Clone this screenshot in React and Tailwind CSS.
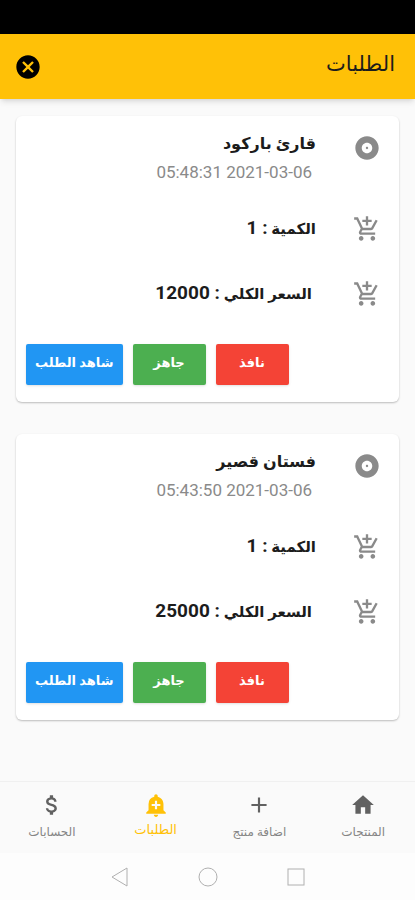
import React from 'react';
import { useState } from 'react';
import {
  MdAdd,
  MdAddAlert,
  MdAddShoppingCart,
  MdAlbum,
  MdAttachMoney,
  MdCancel,
  MdHome,
} from 'react-icons/md';

const orders = [
  { id: 1, name: 'قارئ باركود', date: '2021-03-06 05:48:31', count: 1, total: 12000 },
  { id: 2, name: 'فستان قصير', date: '2021-03-06 05:43:50', count: 1, total: 25000 },
];

const tabs = [
  { id: 'products', label: 'المنتجات', Icon: MdHome },
  { id: 'add', label: 'اضافة منتج', Icon: MdAdd },
  { id: 'orders', label: 'الطلبات', Icon: MdAddAlert },
  { id: 'accounts', label: 'الحسابات', Icon: MdAttachMoney },
];

const OrderCard = ({ order }) => {
  const button =
    'h-[41px] min-w-[73px] rounded-xs px-[9px] pb-1 text-[13px] font-bold text-white shadow-sm';

  return (
    <article className="rounded-md bg-white pt-4 pb-[17px] shadow-[0_1px_2px_rgba(0,0,0,0.25)]">
      <div className="flex gap-[37px] px-[18px]">
        <MdAlbum className="mt-[2px] size-7 shrink-0 text-[#8a8a8a]" />
        <div>
          <h2 className="text-base leading-6 font-bold">{order.name}</h2>
          <p className="mt-1 pr-1 text-[17px] leading-6 text-[#8a8a8a]">
            {order.date}
          </p>
        </div>
      </div>

      <div className="mt-3 flex h-[65px] items-center gap-[37px] px-[18px]">
        <MdAddShoppingCart className="size-7 shrink-0 text-[#8a8a8a]" />
        <p className="text-[15px] leading-6 font-bold">
          الكمية <span className="text-[19px]">: {order.count}</span>
        </p>
      </div>
      <div className="flex h-[65px] items-center gap-[37px] px-[18px]">
        <MdAddShoppingCart className="size-7 shrink-0 text-[#8a8a8a]" />
        <p className="pr-1 text-[15px] leading-6 font-bold">
          السعر الكلي <span className="text-[19px]">: {order.total}</span>
        </p>
      </div>

      <div className="mt-[18px] flex justify-end gap-[10px] px-[10px]">
        <button type="button" className={`${button} bg-[#f44336]`}>
          نافذ
        </button>
        <button type="button" className={`${button} bg-[#4caf50]`}>
          جاهز
        </button>
        <button type="button" className={`${button} bg-[#2196f3]`}>
          شاهد الطلب
        </button>
      </div>
    </article>
  );
};

const App = () => {
  const [active, setActive] = useState('orders');

  return (
    <div
      dir="rtl"
      className="flex min-h-screen flex-col bg-[#fafafa] font-[Roboto,'DejaVu_Sans',sans-serif] text-[#1c1c1c]"
    >
      <div className="h-[34px] bg-black" />
      <header className="flex h-[65px] items-center justify-between bg-[#ffc107] pr-5 pl-[14px] shadow-md">
        <h1 className="pb-1 text-[21px] font-medium">الطلبات</h1>
        <button type="button" aria-label="إغلاق">
          <MdCancel className="size-7 text-black" />
        </button>
      </header>

      <main className="flex grow flex-col gap-8 px-4 py-[17px]">
        {orders.map((order) => (
          <OrderCard key={order.id} order={order} />
        ))}
      </main>

      <nav className="flex h-[72px] border-t border-[#f0f0f0]">
        {tabs.map(({ id, label, Icon }) => (
          <button
            key={id}
            type="button"
            onClick={() => setActive(id)}
            className={`flex flex-1 flex-col items-center pt-[10px] ${
              active === id
                ? 'gap-1 text-[13px] text-[#ffc107]'
                : 'gap-[6px] text-xs text-[#616161]'
            }`}
          >
            <Icon className="size-[26px]" />
            <span className={active === id ? 'leading-4' : 'leading-4 text-[#858585]'}>
              {label}
            </span>
          </button>
        ))}
      </nav>

      {/* System navigation */}
      <div dir="ltr" className="flex h-[47px] items-center justify-center gap-16 bg-[#fdfdfd]">
        <button type="button" aria-label="رجوع">
          <svg viewBox="0 0 24 24" className="size-6 fill-none stroke-[#b0b0b0]">
            <path d="M19 3v18L4 12z" />
          </svg>
        </button>
        <button type="button" aria-label="الرئيسية">
          <svg viewBox="0 0 24 24" className="size-6 fill-none stroke-[#b0b0b0]">
            <circle cx="12" cy="12" r="9" />
          </svg>
        </button>
        <button type="button" aria-label="التطبيقات">
          <svg viewBox="0 0 24 24" className="size-6 fill-none stroke-[#b0b0b0]">
            <rect x="4" y="4" width="16" height="16" />
          </svg>
        </button>
      </div>
    </div>
  );
};

export default App;
